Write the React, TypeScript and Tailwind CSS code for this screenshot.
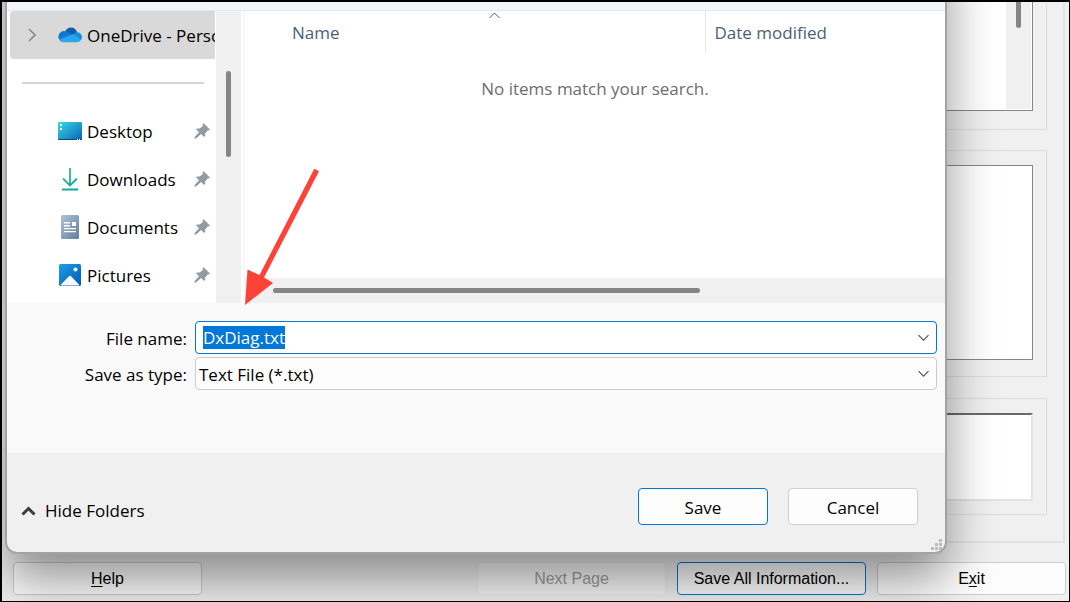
import { useEffect, useRef } from "react";

const PinIcon = () => (
    <svg width="16" height="16" viewBox="0 0 16 16" fill="#929ca4" aria-hidden="true">
        <path d="M10 .6 15.500 5.900c.5.500.2 1.200-.5 1.300l-1.300.2-2.600 3 .1 2.600c0 .8-.9 1.100-1.400.6L7 11.100l-4.600 4.200-2 .5.400-2L5 9.200 2.500 6.700c-.5-.5-.2-1.300.6-1.300l2.600.1L8.700 3l.1-1.700c0-.8.700-1.200 1.200-.7Z" />
    </svg>
);

const OneDriveIcon = () => (
    <svg width="24" height="16" viewBox="0 0 24 16" aria-hidden="true">
        <path d="M7 5C8.100 2 10.200.4 12.800.4c3 0 5.600 2 6.400 4.900L13.500 8.500 7 5Z" fill="#0f5cb0" />
        <path d="M7.200 4.200c1 0 2 .3 2.800.8l5.500 3.300L5 15.300A5.600 5.600 0 0 1 .9 12 5.600 5.600 0 0 1 7.200 4.200Z" fill="#0f78d4" />
        <path d="M19 5.200c2.900 0 5 2.200 5 5 0 1.200-.4 2.200-1.100 3.100L14.600 7.800l1.900-1.600c.7-.6 1.600-1 2.500-1Z" fill="#1490df" />
        <path d="m1.200 12.600 13.200-5 8.800 5.200a4.900 4.900 0 0 1-4.100 2.400H5.700a5.600 5.600 0 0 1-4.500-2.600Z" fill="#28a8ea" />
    </svg>
);

const DesktopIcon = () => (
    <svg width="24" height="18" viewBox="0 0 24 18" aria-hidden="true">
        <defs>
            <linearGradient id="desktop-fill" x1="0" y1="0" x2="1" y2="1">
                <stop offset="0" stopColor="#37dbe6" />
                <stop offset="1" stopColor="#0c62b8" />
            </linearGradient>
        </defs>
        <rect width="24" height="18" rx="1" fill="url(#desktop-fill)" />
        <path d="M0 17h24v0a1 1 0 0 1-1 1H1a1 1 0 0 1-1-1Z" fill="#0a4a80" />
        <path d="M2 2h2v2H2zM2 6h2v2H2zM19 17h1v1h-1zM21 17h1v1h-1z" fill="#fff" />
    </svg>
);

const DownloadsIcon = () => (
    <svg width="24" height="24" viewBox="0 0 24 24" fill="none" strokeWidth="1.8" aria-hidden="true">
        <defs>
            <linearGradient id="download-stroke" gradientUnits="userSpaceOnUse" x1="4" y1="1" x2="20" y2="23">
                <stop offset="0" stopColor="#35c481" />
                <stop offset="1" stopColor="#0d9fa5" />
            </linearGradient>
        </defs>
        <path d="M12 1v17M5 11.500l7 7 7-7M4 22.500h16" stroke="url(#download-stroke)" />
    </svg>
);

const DocumentsIcon = () => (
    <svg width="18" height="24" viewBox="0 0 18 24" aria-hidden="true">
        <defs>
            <linearGradient id="document-fill" x1="0" y1="0" x2="1" y2="1">
                <stop offset="0" stopColor="#b0c3d8" />
                <stop offset="1" stopColor="#617f9f" />
            </linearGradient>
        </defs>
        <rect width="18" height="24" rx="1.500" fill="url(#document-fill)" />
        <path d="M3 7h6v1.400H3zM3 10h6v1.400H3zM11 7h4v4h-4zM3 13h12v1.300H3zM3 16h12v1.300H3z" fill="#fff" />
    </svg>
);

const PicturesIcon = () => (
    <svg width="22" height="22" viewBox="0 0 22 22" aria-hidden="true">
        <defs>
            <linearGradient id="picture-fill" x1="0" y1="0" x2="1" y2="1">
                <stop offset="0" stopColor="#1ba0e8" />
                <stop offset="1" stopColor="#0659ae" />
            </linearGradient>
        </defs>
        <rect width="22" height="22" rx="1.500" fill="url(#picture-fill)" />
        <path d="M1.500 21 10 12.200a1.500 1.500 0 0 1 2 0L20.500 21c-.3.300-.6.400-1 .4h-17c-.4 0-.7-.1-1-.4Z" fill="#f4f9fd" />
        <circle cx="16.500" cy="5.500" r="2" fill="#fff" />
    </svg>
);

const ChevronDown = () => (
    <svg
        className="pointer-events-none absolute top-1/2 right-2 -translate-y-1/2"
        width="11"
        height="7"
        viewBox="0 0 11 7"
        fill="none"
        stroke="#555"
        strokeWidth="1.200"
        aria-hidden="true"
    >
        <path d="m.5.700 5 5 5-5" />
    </svg>
);

const places = [
    { name: "Desktop", icon: <DesktopIcon /> },
    { name: "Downloads", icon: <DownloadsIcon /> },
    { name: "Documents", icon: <DocumentsIcon /> },
    { name: "Pictures", icon: <PicturesIcon /> },
];

const Sidebar = () => (
    <nav className="flex w-[234px] shrink-0 bg-white" aria-label="Folders">
        <div className="min-w-0 flex-1 pr-px">
            <a
                href="#onedrive"
                className="ml-[3px] flex h-12 items-center overflow-hidden rounded-l-sm bg-[#d9d9d9] whitespace-nowrap"
            >
                <span className="flex w-12 shrink-0 justify-center pr-1">
                    <svg width="8" height="14" viewBox="0 0 8 14" fill="none" stroke="#8a8a8a" strokeWidth="1.600" aria-hidden="true">
                        <path d="m1 1 6 6-6 6" />
                    </svg>
                </span>
                <span className="mr-[5px] shrink-0">
                    <OneDriveIcon />
                </span>
                <span className="pt-0.5">OneDrive - Personal</span>
            </a>
            <div className="flex h-12 items-center pr-[11px] pl-[15px]">
                <div className="h-[2px] w-full bg-[#d5d5d5]" />
            </div>
            {places.map((place) => (
                <a key={place.name} href={"#" + place.name} className="flex h-12 items-center pr-[5px] pl-[51px]">
                    <span className="mr-[5px] flex w-6 justify-center">{place.icon}</span>
                    <span className="flex-1 pt-0.5">{place.name}</span>
                    <PinIcon />
                </a>
            ))}
        </div>
        <div className="flex w-[25px] justify-center bg-[#f0f0f0] pt-[60px]">
            <div className="h-[86px] w-[5px] rounded-full bg-[#858585]" />
        </div>
    </nav>
);

const FileList = () => (
    <div className="flex flex-1 flex-col border-l-2 border-[#f8f8f8] bg-white">
        <div className="relative flex-1">
            <svg
                className="absolute top-px left-[244px]"
                width="11"
                height="7"
                viewBox="0 0 11 7"
                fill="none"
                stroke="#555"
                aria-hidden="true"
            >
                <path d="m.5 6 5-5 5 5" />
            </svg>
            <table className="w-full table-fixed">
                <thead>
                    <tr className="h-[41px] text-left text-[#4c607a]">
                        <th className="w-[460px] border-r border-[#e5e5e5] pt-0.5 pl-[47px] font-normal">Name</th>
                        <th className="pt-0.5 pl-[9px] font-normal">Date modified</th>
                    </tr>
                </thead>
                <tbody>
                    <tr className="h-[72px] text-center text-[#6d6d6d]">
                        <td colSpan={2} className="pt-0.5">
                            No items match your search.
                        </td>
                    </tr>
                </tbody>
            </table>
        </div>
        <div className="flex h-[25px] items-center bg-[#f0f0f0] pl-7">
            <div className="h-[5px] w-[427px] rounded-full bg-[#858585]" />
        </div>
    </div>
);

const SaveDialog = () => {
    const fileName = useRef<HTMLInputElement>(null);

    useEffect(() => {
        fileName.current?.focus();
        fileName.current?.select();
    }, []);

    return (
        <div
            role="dialog"
            aria-label="Save As"
            className="absolute -top-16 right-[122px] left-[3px] overflow-hidden rounded-xl border-2 border-[#a3a3a3] bg-[#f0f0f0] font-['Open_Sans','Noto_Sans',sans-serif] text-[17px] leading-6 text-black shadow-[0_26px_50px_rgba(0,0,0,0.42)]"
        >
            <div className="h-[71px] border-b border-[#e5e8eb] bg-[#f3f5f8]" />
            <div className="flex h-[292px]">
                <Sidebar />
                <div className="w-[2px] bg-white" />
                <FileList />
            </div>

            <div className="flex flex-col gap-[3px] bg-[#f9f9f9] pt-[18px] pr-2 pb-[63px]">
                <div className="flex items-center">
                    <label htmlFor="file-name" className="w-[188px] pt-0.5 pr-2 text-right">
                        File name:
                    </label>
                    <div className="relative flex-1">
                        <input
                            id="file-name"
                            ref={fileName}
                            defaultValue="DxDiag.txt"
                            className="block h-[33px] w-full rounded-sm border border-[#0078d4] bg-white px-[7px] outline-none selection:bg-[#0078d7] selection:text-white"
                        />
                        <ChevronDown />
                    </div>
                </div>
                <div className="flex items-center">
                    <label htmlFor="file-type" className="w-[188px] pt-0.5 pr-2 text-right">
                        Save as type:
                    </label>
                    <div className="relative flex-1">
                        <select
                            id="file-type"
                            className="block h-[33px] w-full appearance-none rounded-sm border border-[#cccccc] bg-[#fdfdfd] px-[3px] pt-0.5"
                        >
                            <option>Text File (*.txt)</option>
                        </select>
                        <ChevronDown />
                    </div>
                </div>
            </div>

            <div className="relative flex h-[99px] items-start gap-5 pt-[35px] pr-[27px] pl-[14px]">
                <button className="mr-auto flex items-center gap-[9px] pt-[11px]">
                    <svg width="15" height="10" viewBox="0 0 15 10" fill="none" stroke="#3c3c3c" strokeWidth="3" aria-hidden="true">
                        <path d="m1.500 8.500 6-6 6 6" />
                    </svg>
                    Hide Folders
                </button>
                <button className="h-[37px] w-[130px] rounded border border-[#0078d4] bg-[#fdfdfd] pt-0.5">Save</button>
                <button className="h-[37px] w-[130px] rounded border border-[#d0d0d0] bg-[#fdfdfd] pt-0.5">Cancel</button>
                <svg className="absolute right-[3px] bottom-[2px]" width="11" height="11" viewBox="0 0 11 11" fill="#bcbcbc" aria-hidden="true">
                    <path d="M8 0h3v3H8zM4 4h3v3H4zM8 4h3v3H8zM0 8h3v3H0zM4 8h3v3H4zM8 8h3v3H8z" />
                </svg>
            </div>
        </div>
    );
};

/* Group boxes of the window behind the dialog */
const InfoPanels = () => (
    <div className="mr-1 ml-4 flex h-[541px] flex-col gap-[21px] border-r-2 border-b-2 border-[#e3e3e3] pr-4">
        <div className="h-32 border-r border-b border-[#dcdcdc] pr-[13px]">
            <div className="flex h-[109px] justify-end border-r border-b border-[#828790] bg-white pr-px pb-px">
                <div className="flex w-[25px] justify-center bg-[#f0f0f0]">
                    <div className="h-[26px] w-[5px] rounded-b-full bg-[#858585]" />
                </div>
            </div>
        </div>
        <div className="-mt-px h-[227px] border border-[#dcdcdc] pt-[14px] pr-[13px]">
            <div className="h-[195px] border border-[#828790] bg-white" />
        </div>
        <div className="h-[117px] border border-[#dcdcdc] pt-[14px] pr-[13px]">
            <div className="h-[88px] border-t-2 border-r-2 border-b-2 border-t-[#696969] border-r-[#e3e3e3] border-b-[#e3e3e3] bg-white" />
        </div>
    </div>
);

const App = () => {
    return (
        <main className="relative flex min-h-screen flex-col overflow-hidden border-t-2 border-r border-b border-l-2 border-black bg-[#f0f0f0]">
            <InfoPanels />

            <div className="flex gap-[11px] pt-[19px] pr-[3px] pb-[6px] pl-[11px] font-['Liberation_Sans',Arial,sans-serif] text-base text-black">
                <button className="mr-auto h-[33px] w-[189px] rounded border border-[#cccccc] bg-[#fdfdfd]">
                    <span className="underline underline-offset-2">H</span>elp
                </button>
                <button disabled className="h-[33px] w-[189px] rounded border border-[#ececec] bg-[#f7f7f7] text-[#9d9d9d]">
                    Next Page
                </button>
                <button className="h-[33px] w-[189px] rounded border border-[#0078d4] bg-[#fdfdfd]">
                    Save All Information...
                </button>
                <button className="h-[33px] w-[189px] rounded border border-[#cccccc] bg-[#fdfdfd]">
                    E<span className="underline underline-offset-2">x</span>it
                </button>
            </div>

            <SaveDialog />

            {/* Pointer arrow to the file name box */}
            <svg className="pointer-events-none absolute top-[166px] left-[242px]" width="75" height="138" viewBox="0 0 75 138" aria-hidden="true">
                <path d="m70.300.800 4.700 2.400L20 109.500l9 5.500L1 137l2.500-35.500 12 5.500Z" fill="#ff4238" />
            </svg>
        </main>
    );
};

export default App;
